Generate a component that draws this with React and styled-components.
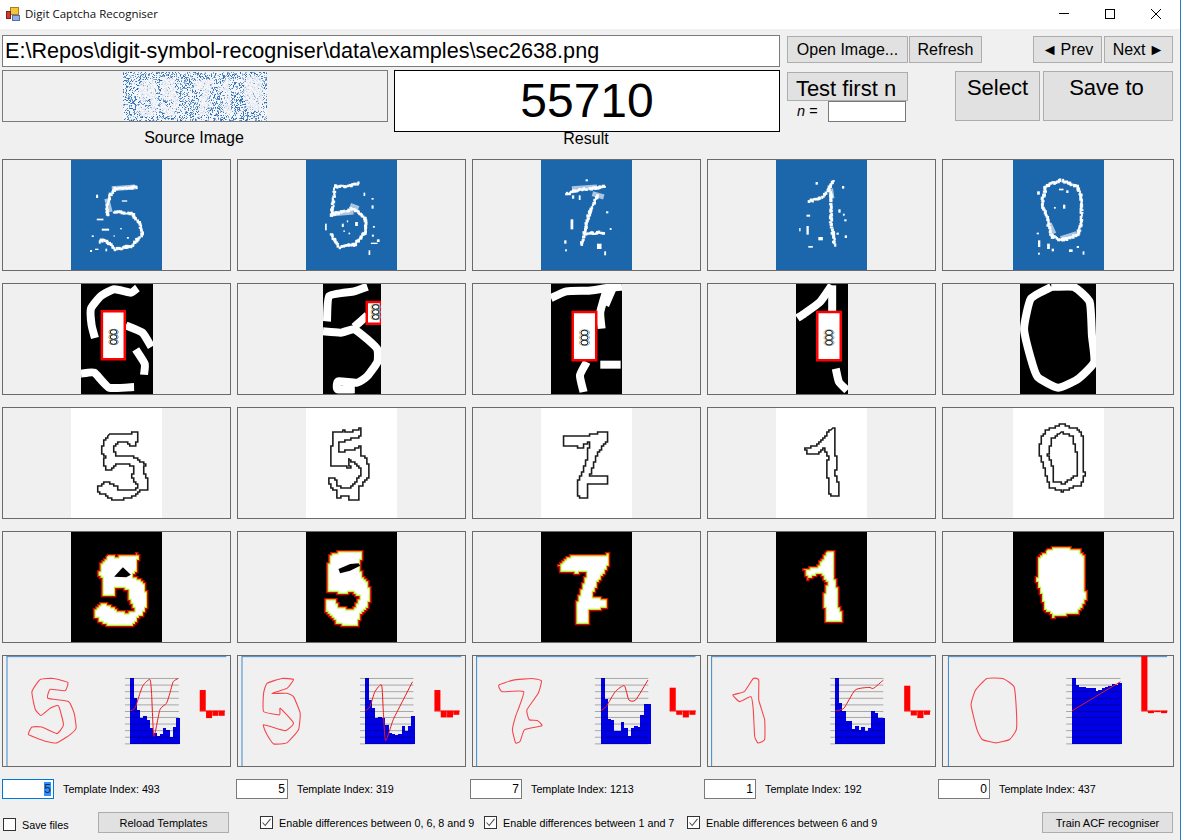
import React, { useId } from "react";
import styled, { createGlobalStyle } from "styled-components";

const GlobalStyle = createGlobalStyle`
  html, body {
    margin: 0;
    padding: 0;
    background: #f0f0f0;
    overflow: hidden;
  }
  * { box-sizing: border-box; }
`;

const Window = styled.div`
  width: 1181px;
  height: 840px;
  background: #f0f0f0;
  border-right: 1px solid #2a7cbd;
  font-family: "Liberation Sans", Arial, sans-serif;
  color: #000;
  overflow: hidden;
`;

const TitleBar = styled.header`
  height: 29px;
  background: #fff;
  display: flex;
  align-items: center;
  padding: 0 0 2px 5px;
`;
const TitleText = styled.span`
  font-family: "Open Sans", sans-serif;
  font-size: 11.5px;
  margin-left: 4px;
  color: #111;
`;
const WindowControls = styled.div`
  margin-left: auto;
  display: flex;
  padding-right: 1px;
`;
const ControlButton = styled.div`
  width: 46px;
  height: 27px;
  display: flex;
  align-items: center;
  justify-content: center;
`;

const PathRow = styled.div`
  display: flex;
  align-items: flex-start;
  margin-top: 6px;
  height: 32px;
  padding-left: 2px;
`;
const PathBox = styled.div`
  width: 778px;
  height: 32px;
  background: #fff;
  border: 1px solid #7a7a7a;
  font-size: 21.6px;
  line-height: 30px;
  padding-left: 2px;
  white-space: nowrap;
`;
const Button = styled.div`
  width: ${(p) => p.$w}px;
  height: ${(p) => p.$h}px;
  margin-top: ${(p) => p.$top || 0}px;
  margin-left: ${(p) => p.$left || 0}px;
  padding-right: ${(p) => p.$pr || 0}px;
  background: #e1e1e1;
  border: 1px solid #adadad;
  font-size: ${(p) => p.$size || 16}px;
  line-height: ${(p) => p.$line || p.$h - 2}px;
  text-align: center;
  white-space: nowrap;
  flex-shrink: 0;
`;
const Arrow = styled.span`
  margin: ${(p) => (p.$after ? "0 0 0 3px" : "0 3px 0 0")};
`;
const Spacer = styled.div`
  flex: ${(p) => (p.$w ? `0 0 ${p.$w}px` : 1)};
`;

const InfoRow = styled.div`
  display: flex;
  align-items: flex-start;
  margin-top: 3px;
  height: 89px;
  padding-left: 2px;
`;
const InfoColumn = styled.div`
  width: ${(p) => p.$w}px;
  margin-left: ${(p) => p.$left || 0}px;
  flex-shrink: 0;
`;
const SourceFrame = styled.div`
  height: 52px;
  border: 1px solid #7a7a7a;
  display: flex;
  justify-content: center;
  align-items: center;
`;
const ResultBox = styled.div`
  height: 62px;
  background: #fff;
  border: 1px solid #000;
  font-size: 48px;
  line-height: 60px;
  text-align: center;
`;
const Caption = styled.div`
  font-size: 16px;
  line-height: 18px;
  text-align: center;
  margin-top: ${(p) => p.$top}px;
  padding-right: 2px;
`;
const NRow = styled.div`
  display: flex;
  align-items: center;
  height: 21px;
`;
const NLabel = styled.span`
  font-size: 14.5px;
  font-style: italic;
  width: 41px;
  padding: 0 0 2px 10px;
`;
const NInput = styled.div`
  width: 78px;
  height: 21px;
  background: #fff;
  border: 1px solid #7a7a7a;
`;

const Grid = styled.div`
  display: grid;
  grid-template-columns: repeat(4, 229px) 232px;
  grid-auto-rows: 112px;
  column-gap: 6px;
  row-gap: 12px;
  padding-left: 2px;
`;
const Panel = styled.div`
  border: 1px solid #6a6a6a;
  background: #f0f0f0;
  display: flex;
  justify-content: center;
  align-items: flex-start;
`;
const Drawing = styled.svg`
  display: block;
  width: ${(p) => p.$w}px;
  height: 110px;
  background: ${(p) => p.$bg || "transparent"};
  flex-shrink: 0;
  * { vector-effect: non-scaling-stroke; }
`;
const Soft = styled.g`
  filter: blur(${(p) => p.$r || 1}px);
`;

const FieldRow = styled.div`
  display: flex;
  margin-top: 12px;
  height: 20px;
  padding-left: 2px;
`;
const FieldGroup = styled.div`
  width: 234px;
  display: flex;
  align-items: center;
`;
const Field = styled.div`
  width: 52px;
  height: 20px;
  background: #fff;
  border: 1px solid ${(p) => (p.$focused ? "#0078d7" : "#7a7a7a")};
  font-size: 12px;
  line-height: 18px;
  text-align: right;
  padding-right: 2px;
`;
const Selected = styled.span`
  background: #3390ff;
  color: #14304f;
`;
const SmallText = styled.span`
  font-size: 10.75px;
  white-space: nowrap;
  margin-left: ${(p) => p.$left || 0}px;
`;

const BottomRow = styled.div`
  display: flex;
  align-items: center;
  margin-top: 13px;
  height: 21px;
  padding-right: 7px;
`;
const CheckItem = styled.div`
  display: flex;
  align-items: center;
  width: ${(p) => p.$w}px;
  margin-left: ${(p) => p.$left || 0}px;
  padding-top: ${(p) => p.$drop || 0}px;
  flex-shrink: 0;
`;
const CheckBox = styled.div`
  width: 13px;
  height: 13px;
  background: #fff;
  border: 1px solid #333;
  display: flex;
  align-items: center;
  justify-content: center;
  flex-shrink: 0;
`;

// shapes are written in the coordinates of the zoomed reference, so every svg views its own window of them
const DIGITS = [
  {
    value: "5",
    index: 493,
    thin: { x: 213, w: 272, px: 91 },
    bin: { x: 240, w: 217, px: 72 },
    strokes: [
      "410,95 385,98 345,100 330,120 322,150 322,185",
      "345,170 395,175 418,205 428,235 395,272 345,282 320,258 298,255",
    ],
    faint: ["335,100 405,95", "320,130 330,170"],
    specks: [[288,118,6,10],[290,190,20,5],[305,220,22,6],[275,240,6,5],[296,255,6,10],[270,284,6,6],[285,280,10,4],[316,280,5,8],[360,218,5,4],[380,245,6,5],[365,135,16,4],[305,250,8,5],[340,240,4,4]],
    binPaths: [
      "410,398 390,412 340,402 300,422 270,460 272,510 282,548",
      "375,510 425,532 452,575",
      "405,582 432,625 430,658",
      "240,655 280,652 325,697 400,695",
    ],
    rect: [303, 468, 69, 144],
    ring: [338, 545, 12],
    contours: ["328,100 352,103 385,100 412,95 412,125 400,140 385,125 355,125 340,145 345,165 395,168 415,180 435,195 430,215 440,240 440,268 415,275 395,295 345,300 320,285 292,275 292,258 318,243 340,255 360,272 395,272 415,255 395,225 402,205 390,190 350,190 335,210 318,210 310,180 315,170 305,150 310,125"],
    blob: "322,462 345,465 378,462 412,458 416,470 415,500 408,520 398,528 410,530 428,540 438,558 442,590 445,620 430,645 410,665 398,680 345,680 320,675 295,660 282,650 278,630 290,612 310,605 335,615 355,630 380,634 400,625 385,595 385,572 365,562 350,565 345,590 305,590 302,560 305,540 295,520 297,490 310,475",
    hole: "342,528 368,500 392,522 378,530",
    plot: {
      x: 8, w: 683, px: 227,
      shape: "120,88 160,85 203,97 195,122 150,118 143,145 205,155 222,190 228,235 210,255 170,280 135,275 85,255 95,232 125,232 170,252 190,225 175,168 150,175 122,197 105,178 95,125",
      lines: [375, 537],
      bars: { x: 390, w: 9.9, tops: [85,145,180,205,198,210,235,250,258,252,235,240,262,232,205] },
      curve: "390,183 405,175 420,130 430,105 450,88 455,130 462,260 480,180 500,160 510,130 520,95 535,85",
      red: { x: 600, w: 19, tops: [120], downs: [205,198,198] },
      edge: [20, 680],
    },
  },
  {
    value: "5",
    index: 319,
    thin: { x: 918, w: 272, px: 91 },
    bin: { x: 966, w: 175, px: 58 },
    strokes: [
      "1075,85 1040,92 1005,95 1000,130 996,180",
      "996,178 1060,160 1095,190 1097,230 1062,268 1018,275 990,235",
    ],
    faint: ["1000,175 1060,170", "1050,150 1075,160"],
    specks: [[1090,112,5,10],[1114,128,6,5],[1114,150,6,10],[975,205,5,20],[1025,205,6,10],[1065,200,8,12],[1030,225,4,5],[1045,232,5,5],[1118,212,6,5],[1115,238,6,6],[1112,262,20,4],[1130,252,8,8],[1105,285,5,14],[1040,195,4,6]],
    binPaths: [
      "1100,394 1060,408 985,422 978,498",
      "966,528 1020,532 1060,522 1100,552 1130,582 1130,620 1100,662 1070,682 1012,678 1010,702 1062,702",
      "1060,515 1100,480",
    ],
    rect: [1098, 440, 43, 65],
    ring: [1125, 470, 12],
    contours: ["998,98 1030,92 1045,95 1083,85 1085,108 1040,122 1015,130 1015,155 1050,150 1078,140 1085,165 1100,180 1106,205 1106,235 1090,250 1075,270 1075,300 1050,298 1040,285 1012,295 1010,268 995,265 985,235 1006,235 1012,260 1045,265 1070,240 1085,215 1075,195 1045,175 1050,205 1030,195 990,195 992,155 996,130"],
    blob: "985,462 1010,452 1040,452 1085,448 1090,470 1082,490 1088,525 1105,545 1112,575 1108,620 1085,650 1075,680 1045,680 1010,672 985,640 973,625 975,595 1005,595 1020,620 1055,622 1075,590 1055,575 1045,580 980,578 980,520",
    hole: "1015,505 1050,490 1075,488 1080,495 1050,510 1020,518",
    plot: {
      x: 713, w: 683, px: 227,
      shape: "800,100 845,85 880,88 860,115 815,130 860,130 880,140 900,190 895,240 860,280 820,283 800,255 790,225 855,243 880,220 840,175 838,195 790,185 790,130",
      lines: [1080, 1241],
      bars: { x: 1095, w: 10, tops: [85,150,175,205,203,205,225,250,252,255,253,228,243,228,200] },
      curve: "1097,183 1110,170 1125,125 1145,105 1150,180 1157,273 1180,210 1210,150 1238,95",
      red: { x: 1304, w: 19, tops: [120], downs: [203,203,195] },
      edge: [725, 1385],
    },
  },
  {
    value: "7",
    index: 1213,
    thin: { x: 157, w: 200, px: 91 },
    bin: { x: 176, w: 157, px: 71 },
    strokes: [
      "212,118 240,105 300,92",
      "280,122 262,180 245,272",
      "255,235 298,232",
    ],
    faint: ["225,100 280,95", "270,115 295,125"],
    specks: [[255,72,5,6],[300,168,5,6],[222,192,6,30],[208,255,5,10],[210,282,4,6],[308,218,4,6],[280,265,10,16],[296,288,4,12],[240,120,4,14],[225,120,5,10]],
    binPaths: [
      "176,428 210,408 260,406 300,398 333,394",
      "300,398 285,470 288,520",
      "312,400 296,450",
      "255,620 240,660 248,710",
      "285,628 330,628",
    ],
    rect: [224, 470, 52, 145],
    ring: [250, 547, 9],
    contours: ["207,110 235,105 245,110 270,100 302,97 302,125 285,155 275,185 265,225 302,228 302,250 262,250 258,280 258,295 240,295 237,245 250,210 258,175 263,125 245,145 232,135 210,140 205,125"],
    blob: "215,465 260,462 305,458 308,490 300,515 285,545 272,590 305,592 305,625 265,630 262,670 232,672 232,610 245,560 255,515 240,520 200,515 195,490",
    plot: {
      x: 6, w: 501, px: 227,
      shape: "63,105 95,90 135,85 157,92 150,130 125,180 130,210 148,212 158,228 120,240 110,275 100,280 93,240 100,200 118,125 70,125",
      lines: [275, 393],
      bars: { x: 288, w: 7.3, tops: [85,148,208,212,245,243,218,235,258,235,230,232,195,163,163] },
      curve: "288,183 300,170 320,125 340,107 350,150 365,150 392,90",
      red: { x: 440, w: 14.5, tops: [113], downs: [195,203,195] },
      edge: [14, 497],
    },
  },
  {
    value: "1",
    index: 192,
    thin: { x: 675, w: 200, px: 91 },
    bin: { x: 717, w: 115, px: 52 },
    strokes: [
      "800,78 785,115 770,130 746,138",
      "795,110 796,200 805,272",
    ],
    faint: ["795,100 798,130"],
    specks: [[762,80,5,8],[820,92,5,8],[812,162,5,10],[822,175,4,6],[742,178,8,6],[825,192,5,6],[742,212,5,26],[726,218,3,10],[768,245,10,10],[826,240,5,8],[746,272,10,5],[808,232,5,6]],
    binPaths: [
      "796,390 770,440 735,475 720,488",
      "797,390 797,470",
      "805,640 812,680 830,705",
    ],
    rect: [764, 470, 52, 145],
    ring: [790, 547, 9],
    contours: ["800,85 805,85 805,145 808,190 805,230 815,265 815,290 795,290 792,265 790,235 785,210 790,170 783,145 770,160 745,163 740,145 760,135 785,100"],
    blob: "785,450 805,450 805,520 812,570 812,615 822,640 820,668 785,665 778,600 778,580 785,545 772,520 745,540 735,505 762,495",
    plot: {
      x: 525, w: 501, px: 227,
      shape: "625,85 637,90 637,150 650,210 650,270 635,280 628,260 625,180 620,140 595,155 580,135 605,125",
      lines: [795, 912],
      bars: { x: 806, w: 7.2, tops: [85,160,185,215,215,238,230,240,232,243,235,185,190,205,205] },
      curve: "806,183 825,175 850,120 880,112 890,115 912,90",
      red: { x: 958, w: 14.5, tops: [107], downs: [197,205,195] },
      edge: [533, 1017],
    },
  },
  {
    value: "0",
    index: 437,
    thin: { x: 1195, w: 200, px: 91 },
    bin: { x: 1211, w: 168, px: 76 },
    strokes: [
      "1300,75 1338,95 1345,130 1345,210 1335,240 1300,255 1278,240 1270,185 1258,145 1268,90 1300,75",
    ],
    faint: ["1275,205 1285,235", "1300,250 1335,235"],
    specks: [[1248,108,6,10],[1296,100,10,5],[1312,105,5,8],[1305,148,5,12],[1285,155,4,5],[1247,232,5,5],[1250,255,5,20],[1270,265,6,16],[1280,280,5,8],[1318,282,8,8],[1335,272,5,6],[1348,288,4,10],[1250,292,4,6]],
    binPaths: [
      "1280,395 1330,395 1365,440 1370,540 1375,620 1340,670 1295,697 1250,665 1235,610 1220,520 1235,430 1280,395",
    ],
    contours: [
      "1300,72 1340,90 1350,120 1350,180 1352,225 1345,255 1305,273 1275,260 1268,225 1262,190 1252,155 1258,105 1268,90",
      "1300,97 1325,110 1335,160 1335,225 1310,250 1285,245 1285,210 1272,160 1280,115",
    ],
    blob: "1270,442 1300,435 1340,445 1355,470 1355,540 1357,600 1340,640 1285,652 1262,625 1255,580 1245,540 1250,470",
    plot: {
      x: 1043, w: 508, px: 230,
      shape: "1140,85 1175,85 1200,110 1205,180 1205,240 1190,270 1160,280 1130,270 1118,240 1105,165 1115,120",
      lines: [1315, 1435],
      bars: { x: 1328, w: 7.3, tops: [85,105,110,112,115,115,115,123,120,115,112,108,103,105,100] },
      curve: "1328,183 1380,140 1435,95",
      red: { x: 1481, w: 14.5, tops: [16], downs: [190,187,190] },
      edge: [1055, 1538],
    },
  },
];

const LINE_YS = [85, 105, 125, 145, 165, 185, 203, 223, 243, 263, 283];
const CAPTCHA_X = [6, 31, 64, 84, 112];

const toPoints = (str) => str.trim().split(/\s+/).map((p) => p.split(",").map(Number));

// small seeded generator so the noise stays the same between runs
const makeRandom = (seed) => {
  let s = seed;
  return () => {
    s = (s * 1664525 + 1013904223) % 4294967296;
    return s / 4294967296;
  };
};

const makeNoise = (count, seed) => {
  const next = makeRandom(seed);
  return Array.from({ length: count }, () => [Math.floor(next() * 144), Math.floor(next() * 49), next()]);
};
const NOISE_BELOW = makeNoise(2700, 7);
const NOISE_ABOVE = makeNoise(420, 23);

// turn a polygon into the stair steps of a low resolution mask
const pixelate = (str, gx, gy) => {
  const pts = toPoints(str);
  const out = [];
  pts.forEach((a, i) => {
    const b = pts[(i + 1) % pts.length];
    const steps = Math.max(1, Math.ceil(Math.max(Math.abs(b[0] - a[0]) / gx, Math.abs(b[1] - a[1]) / gy)));
    for (let s = 0; s < steps; s++) {
      const x = Math.round((a[0] + ((b[0] - a[0]) * s) / steps) / gx) * gx;
      const y = Math.round((a[1] + ((b[1] - a[1]) * s) / steps) / gy) * gy;
      const last = out[out.length - 1];
      if (last && last[0] === x && last[1] === y) continue;
      if (last && last[0] !== x && last[1] !== y) out.push([x, last[1]]);
      out.push([x, y]);
    }
  });
  return out.map((p) => p.join(",")).join(" ");
};

// catmull-rom through the points, for the traced outlines; a high k keeps the corners
const smoothPath = (str, closed, k = 6) => {
  const pts = toPoints(str);
  const n = pts.length;
  const at = (i) => (closed ? pts[(i + n) % n] : pts[Math.min(n - 1, Math.max(0, i))]);
  let d = `M${pts[0][0]} ${pts[0][1]}`;
  const segs = closed ? n : n - 1;
  for (let i = 0; i < segs; i++) {
    const [p0, p1, p2, p3] = [at(i - 1), at(i), at(i + 1), at(i + 2)];
    d += ` C${p1[0] + (p2[0] - p0[0]) / k} ${p1[1] + (p2[1] - p0[1]) / k} ${p2[0] - (p3[0] - p1[0]) / k} ${p2[1] - (p3[1] - p1[1]) / k} ${p2[0]} ${p2[1]}`;
  }
  return closed ? `${d} Z` : d;
};

// rough blocks along a stroke, the digit in the source is broken up like this
const noisyBlocks = (strokes, sx, seed) => {
  const next = makeRandom(seed);
  const blocks = [];
  strokes.forEach((str) => {
    const pts = toPoints(str);
    for (let i = 0; i < pts.length - 1; i++) {
      const [a, b] = [pts[i], pts[i + 1]];
      const steps = Math.ceil(Math.hypot((b[0] - a[0]) / sx, (b[1] - a[1]) / 3) / 1.5);
      for (let s = 0; s < steps; s++) {
        const t = s / steps;
        const w = (1.8 + next() * 1.8) * sx;
        const h = (1.8 + next() * 1.8) * 3;
        blocks.push([
          a[0] + (b[0] - a[0]) * t - w / 2 + (next() - 0.5) * sx * 1.6,
          a[1] + (b[1] - a[1]) * t - h / 2 + (next() - 0.5) * 5,
          w,
          h,
        ]);
      }
    }
  });
  return blocks;
};

const CaptchaImage = () => (
  <svg width="144" height="49" viewBox="0 0 144 49" style={{ display: "block", background: "#f4f5f8" }}>
    {NOISE_BELOW.map(([x, y, a], i) => (
      <rect key={i} x={x} y={y} width="1" height="1" fill="#1f66b2" opacity={0.4 + a * 0.6} />
    ))}
    {DIGITS.map((d, i) => (
      <svg key={i} x={CAPTCHA_X[i]} y="-3" width="34" height="55" viewBox={`${d.thin.x} 394 ${d.thin.w} 330`} preserveAspectRatio="none">
        <polygon points={d.blob} fill="#f4f5f8" opacity="0.85" />
      </svg>
    ))}
    {NOISE_ABOVE.map(([x, y, a], i) => (
      <rect key={i} x={x} y={y} width="1" height="1" fill="#5d92cd" opacity={0.3 + a * 0.6} />
    ))}
  </svg>
);

const NoisyDigit = ({ d, seed }) => {
  const sx = d.thin.w / d.thin.px;
  return (
    <Drawing $w={d.thin.px} $bg="#1c66ab" viewBox={`${d.thin.x} 14 ${d.thin.w} 330`} preserveAspectRatio="none">
      <Soft>
        {d.faint.map((p) => (
          <polyline key={p} points={p} fill="none" stroke="#a9c5e2" strokeWidth="5" />
        ))}
        {noisyBlocks(d.strokes, sx, seed).map(([x, y, w, h], i) => (
          <rect key={i} x={x} y={y} width={w} height={h} fill="#fbfdff" />
        ))}
        {d.specks.map(([x, y, w, h]) => (
          <rect key={`${x}-${y}`} x={x} y={y} width={w} height={h} fill="#fff" />
        ))}
      </Soft>
    </Drawing>
  );
};

const BinaryDigit = ({ d }) => {
  const r = d.rect;
  return (
    <Drawing $w={d.bin.px} $bg="#000" viewBox={`${d.bin.x} 386 ${d.bin.w} 330`} preserveAspectRatio="none">
      <Soft>
        {d.binPaths.map((p) => (
          <path key={p} d={smoothPath(p, false, 12)} fill="none" stroke="#fff" strokeWidth="8" strokeLinejoin="round" />
        ))}
      </Soft>
      {r && (
        <>
          <rect x={r[0]} y={r[1]} width={r[2]} height={r[3]} fill="#fff" stroke="#f00" strokeWidth="2.5" />
          {[-15, 0, 15].map((dy) => (
            <g key={dy}>
              <ellipse cx={d.ring[0] - d.ring[2] * 0.2} cy={d.ring[1] + dy} rx={d.ring[2]} ry="8" fill="none" stroke="#f0a040" strokeWidth="1" />
              <ellipse cx={d.ring[0] + d.ring[2] * 0.2} cy={d.ring[1] + dy} rx={d.ring[2]} ry="8" fill="none" stroke="#4aa0ea" strokeWidth="1" />
              <ellipse cx={d.ring[0]} cy={d.ring[1] + dy} rx={d.ring[2] * 0.85} ry="7" fill="none" stroke="#222" strokeWidth="1" />
            </g>
          ))}
        </>
      )}
    </Drawing>
  );
};

const ContourDigit = ({ d }) => {
  const sx = d.thin.w / d.thin.px;
  const outlines = d.contours.map((p) => pixelate(p, sx * 2, 6));
  return (
    <Drawing $w={d.thin.px} $bg="#fff" viewBox={`${d.thin.x} 24 ${d.thin.w} 330`} preserveAspectRatio="none">
      <Soft $r={0.8}>
        {outlines.map((p) => (
          <polygon key={p} points={p} fill="none" stroke="#1c1c1c" strokeWidth="1.6" />
        ))}
      </Soft>
    </Drawing>
  );
};

const BlobDigit = ({ d }) => {
  const clip = useId();
  const sx = d.thin.w / d.thin.px;
  const blob = pixelate(d.blob, sx * 2, 6);
  return (
    <Drawing $w={d.thin.px} $bg="#000" viewBox={`${d.thin.x} 394 ${d.thin.w} 330`} preserveAspectRatio="none">
      <clipPath id={clip}>
        <polygon points={blob} />
      </clipPath>
      <Soft $r={0.5}>
        <polygon points={blob} fill="#fff" />
        <polygon points={blob} fill="none" stroke="#b4f02c" strokeWidth="3.6" clipPath={`url(#${clip})`} />
        <polygon points={blob} fill="none" stroke="#d80000" strokeWidth="1.4" />
        {d.hole && <polygon points={d.hole} fill="#000" />}
      </Soft>
    </Drawing>
  );
};

const PlotDigit = ({ d }) => {
  const p = d.plot;
  return (
    <Drawing $w={p.px} viewBox={`${p.x} 17 ${p.w} 333`} preserveAspectRatio="none">
      <line x1={p.edge[0]} y1="19" x2={p.edge[1]} y2="19" stroke="#3f88c5" strokeWidth="1" />
      <line x1={p.edge[0]} y1="17" x2={p.edge[0]} y2="350" stroke="#3f88c5" strokeWidth="1" />
      <path d={smoothPath(p.shape, true, 14)} fill="none" stroke="#f6464c" strokeWidth="1.1" />
      {p.bars.tops.map((top, i) => (
        <rect key={i} x={p.bars.x + i * p.bars.w} y={top} width={p.bars.w + 1} height={283 - top} fill="#0000e6" shapeRendering="crispEdges" />
      ))}
      {LINE_YS.map((y) => (
        <line key={y} x1={p.lines[0]} y1={y} x2={p.lines[1]} y2={y} stroke="#000" strokeWidth="1" opacity="0.3" />
      ))}
      <path d={smoothPath(p.curve, false, 10)} fill="none" stroke="#f01818" strokeWidth="1" />
      <rect x={p.red.x} y={p.red.tops[0]} width={p.red.w - 1} height={183 - p.red.tops[0]} fill="#f00" />
      {p.red.downs.map((bottom, i) => (
        <rect key={i} x={p.red.x + (i + 1) * p.red.w} y="183" width={p.red.w - 1} height={bottom - 183} fill="#f00" />
      ))}
      <line x1={p.red.x} y1="183.5" x2={p.red.x + 4 * p.red.w} y2="183.5" stroke="#f00" strokeWidth="1" />
    </Drawing>
  );
};

const WindowIcon = () => (
  <svg width="16" height="16" viewBox="0 0 16 16">
    <rect x="5.5" y="1.5" width="8" height="7" fill="#f6c63a" stroke="#a87f1c" />
    <rect x="7.5" y="9.5" width="7" height="5" fill="#8fb0ea" stroke="#5a6fa8" />
    <rect x="1.5" y="5.5" width="4" height="7" fill="#d23a2c" stroke="#7c2018" />
  </svg>
);

const CheckMark = () => (
  <svg width="11" height="11" viewBox="0 0 11 11">
    <path d="M1.5 5.5 L4.2 8.5 L9.5 1.8" fill="none" stroke="#555" strokeWidth="1.1" />
  </svg>
);

const App = () => (
  <Window>
    <GlobalStyle />
    <TitleBar>
      <WindowIcon />
      <TitleText>Digit Captcha Recogniser</TitleText>
      <WindowControls>
        <ControlButton>
          <svg width="10" height="10" viewBox="0 0 10 10">
            <line x1="0" y1="4.5" x2="10" y2="4.5" stroke="#000" />
          </svg>
        </ControlButton>
        <ControlButton>
          <svg width="10" height="10" viewBox="0 0 10 10">
            <rect x="0.5" y="0.5" width="9" height="9" fill="none" stroke="#000" />
          </svg>
        </ControlButton>
        <ControlButton>
          <svg width="10" height="10" viewBox="0 0 10 10">
            <path d="M0 0 L10 10 M10 0 L0 10" stroke="#000" strokeWidth="1" />
          </svg>
        </ControlButton>
      </WindowControls>
    </TitleBar>

    <PathRow>
      <PathBox>E:\Repos\digit-symbol-recogniser\data\examples\sec2638.png</PathBox>
      <Button $w={121} $h={27} $top={1} $left={7}>Open Image...</Button>
      <Button $w={73} $h={27} $top={1} $left={1}>Refresh</Button>
      <Spacer />
      <Button $w={69} $h={27} $top={1}><Arrow>◄</Arrow>Prev</Button>
      <Button $w={69} $h={27} $top={1} $left={2}>Next<Arrow $after>►</Arrow></Button>
      <Spacer $w={7} />
    </PathRow>

    <InfoRow>
      <InfoColumn $w={386}>
        <SourceFrame>
          <CaptchaImage />
        </SourceFrame>
        <Caption $top={7}>Source Image</Caption>
      </InfoColumn>
      <InfoColumn $w={386} $left={6}>
        <ResultBox>55710</ResultBox>
        <Caption $top={-2}>Result</Caption>
      </InfoColumn>
      <InfoColumn $w={121} $left={7}>
        <Button $w={121} $h={29} $top={2} $size={22} $line={31} $pr={3}>Test first n</Button>
        <NRow>
          <NLabel>n =</NLabel>
          <NInput />
        </NRow>
      </InfoColumn>
      <Button $w={85} $h={50} $top={1} $left={47} $size={22} $line={32}>Select</Button>
      <Button $w={130} $h={50} $top={1} $left={3} $size={22} $pr={3} $line={32}>Save to</Button>
    </InfoRow>

    <Grid>
      {DIGITS.map((d, i) => (
        <Panel key={`thin-${i}`}><NoisyDigit d={d} seed={i * 31 + 5} /></Panel>
      ))}
      {DIGITS.map((d, i) => (
        <Panel key={`bin-${i}`}><BinaryDigit d={d} /></Panel>
      ))}
      {DIGITS.map((d, i) => (
        <Panel key={`contour-${i}`}><ContourDigit d={d} /></Panel>
      ))}
      {DIGITS.map((d, i) => (
        <Panel key={`blob-${i}`}><BlobDigit d={d} /></Panel>
      ))}
      {DIGITS.map((d, i) => (
        <Panel key={`plot-${i}`}><PlotDigit d={d} /></Panel>
      ))}
    </Grid>

    <FieldRow>
      {DIGITS.map((d, i) => (
        <FieldGroup key={i}>
          <Field $focused={i === 0}>{i === 0 ? <Selected>{d.value}</Selected> : d.value}</Field>
          <SmallText $left={9}>Template Index: {d.index}</SmallText>
        </FieldGroup>
      ))}
    </FieldRow>

    <BottomRow>
      <CheckItem $w={95} $left={3} $drop={4}>
        <CheckBox />
        <SmallText $left={6}>Save files</SmallText>
      </CheckItem>
      <Button $w={131} $h={21} $size={11} $line={21}>Reload Templates</Button>
      <CheckItem $w={224} $left={31}>
        <CheckBox><CheckMark /></CheckBox>
        <SmallText $left={6}>Enable differences between 0, 6, 8 and 9</SmallText>
      </CheckItem>
      <CheckItem $w={203}>
        <CheckBox><CheckMark /></CheckBox>
        <SmallText $left={6}>Enable differences between 1 and 7</SmallText>
      </CheckItem>
      <CheckItem $w={203}>
        <CheckBox><CheckMark /></CheckBox>
        <SmallText $left={6}>Enable differences between 6 and 9</SmallText>
      </CheckItem>
      <Spacer />
      <Button $w={131} $h={21} $size={11} $line={21}>Train ACF recogniser</Button>
    </BottomRow>
  </Window>
);

export default App;
